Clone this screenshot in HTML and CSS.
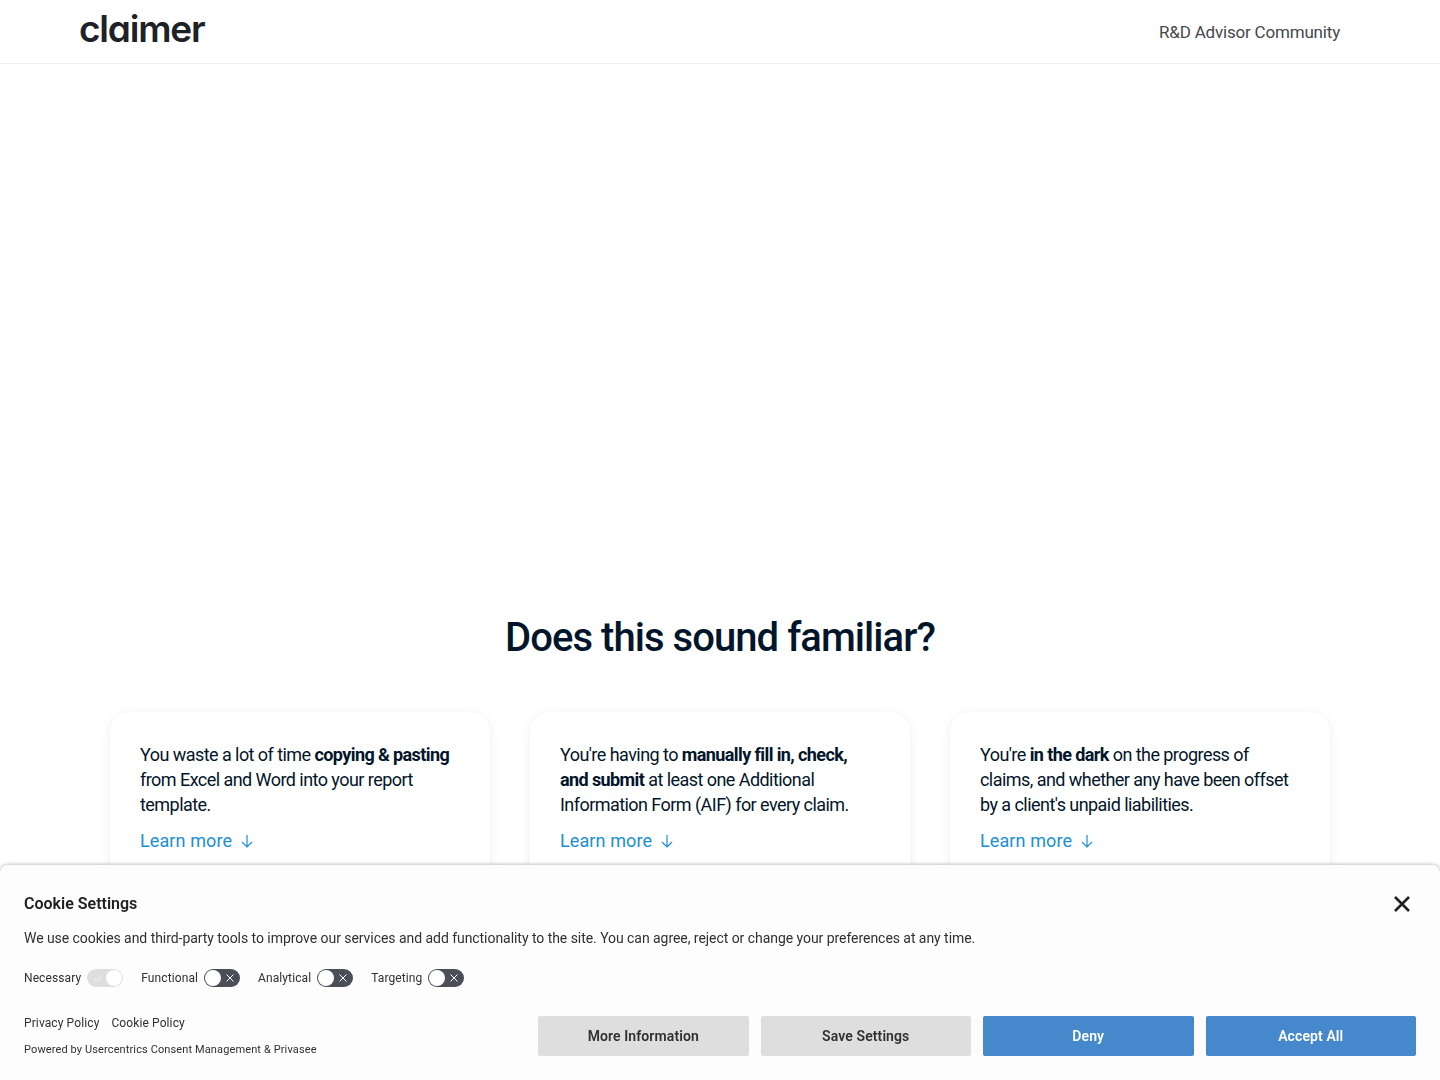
FILE: index.html
```html
<!DOCTYPE html>
<html lang="en">
<head>
    <meta charset="UTF-8">
    <meta name="viewport" content="width=device-width, initial-scale=1.0">
    <title>Claimer</title>
    <link rel="stylesheet" href="styles.css">
</head>
<body>
    <header class="site-header">
        <a class="logo" href="#">claimer</a>
        <a class="nav-link" href="#">R&amp;D Advisor Community</a>
    </header>

    <main>
        <section class="hero"></section>

        <section class="familiar">
            <h2>Does this sound familiar?</h2>
            <div class="cards">
                <div class="card">
                    <p>You waste a lot of time <strong>copying &amp; pasting</strong> from Excel and Word into your report template.</p>
                    <a class="learn-more" href="#">Learn more
                        <svg viewBox="0 0 14 14" width="14" height="14"><path d="M7 1v12M2 8l5 5 5-5"/></svg>
                    </a>
                </div>
                <div class="card">
                    <p>You're having to <strong>manually fill in, check, and submit</strong> at least one Additional Information Form (AIF) for every claim.</p>
                    <a class="learn-more" href="#">Learn more
                        <svg viewBox="0 0 14 14" width="14" height="14"><path d="M7 1v12M2 8l5 5 5-5"/></svg>
                    </a>
                </div>
                <div class="card">
                    <p>You're <strong>in the dark</strong> on the progress of claims, and whether any have been offset by a client's unpaid liabilities.</p>
                    <a class="learn-more" href="#">Learn more
                        <svg viewBox="0 0 14 14" width="14" height="14"><path d="M7 1v12M2 8l5 5 5-5"/></svg>
                    </a>
                </div>
            </div>
        </section>
    </main>

    <div class="cookie-banner">
        <div class="cookie-top">
            <h3>Cookie Settings</h3>
            <button class="cookie-close" aria-label="Close">
                <svg viewBox="0 0 16 16" width="16" height="16"><path d="M1 1l14 14M15 1L1 15"/></svg>
            </button>
        </div>
        <p class="cookie-text">We use cookies and third-party tools to improve our services and add functionality to the site. You can agree, reject or change your preferences at any time.</p>
        <div class="toggles">
            <div class="toggle-item">
                <span>Necessary</span>
                <span class="toggle toggle-on">
                    <svg viewBox="0 0 12 12" width="12" height="12"><path d="M2 6.5l3 3 5-7"/></svg>
                    <i class="knob"></i>
                </span>
            </div>
            <div class="toggle-item">
                <span>Functional</span>
                <span class="toggle toggle-off">
                    <i class="knob"></i>
                    <svg viewBox="0 0 12 12" width="12" height="12"><path d="M2.5 2.5l7 7M9.5 2.5l-7 7"/></svg>
                </span>
            </div>
            <div class="toggle-item">
                <span>Analytical</span>
                <span class="toggle toggle-off">
                    <i class="knob"></i>
                    <svg viewBox="0 0 12 12" width="12" height="12"><path d="M2.5 2.5l7 7M9.5 2.5l-7 7"/></svg>
                </span>
            </div>
            <div class="toggle-item">
                <span>Targeting</span>
                <span class="toggle toggle-off">
                    <i class="knob"></i>
                    <svg viewBox="0 0 12 12" width="12" height="12"><path d="M2.5 2.5l7 7M9.5 2.5l-7 7"/></svg>
                </span>
            </div>
        </div>
        <div class="cookie-bottom">
            <div class="cookie-links">
                <div class="policy-links">
                    <a href="#">Privacy Policy</a>
                    <a href="#">Cookie Policy</a>
                </div>
                <p class="powered">Powered by Usercentrics Consent Management &amp; Privasee</p>
            </div>
            <div class="cookie-buttons">
                <button class="btn btn-grey">More Information</button>
                <button class="btn btn-grey">Save Settings</button>
                <button class="btn btn-blue">Deny</button>
                <button class="btn btn-blue">Accept All</button>
            </div>
        </div>
    </div>
</body>
</html>
```

FILE: styles.css
```css
* {
    box-sizing: border-box;
}

html,
body {
    height: 1080px;
    overflow: hidden;
}

body {
    margin: 0;
    font-family: Roboto, Arial, sans-serif;
    background: #ffffff;
    color: #02152a;
}

a {
    text-decoration: none;
}

.site-header {
    height: 64px;
    padding: 0 100px 0 79px;
    display: flex;
    justify-content: space-between;
    align-items: center;
    border-bottom: 1px solid #eeeeee;
}

.logo {
    font-family: Inter, sans-serif;
    font-feature-settings: "cv11" 1;
    font-weight: 600;
    font-size: 37px;
    line-height: 44px;
    letter-spacing: -1.2px;
    color: #1e2227;
    margin-top: -5px;
}

.nav-link {
    font-size: 17px;
    letter-spacing: -0.19px;
    color: #45484c;
}

.hero {
    height: 547px;
}

.familiar h2 {
    margin: 0;
    text-align: center;
    font-size: 40px;
    line-height: 54px;
    font-weight: 500;
    letter-spacing: -0.95px;
    color: #02152a;
}

.cards {
    margin-top: 47px;
    padding: 0 110px;
    display: grid;
    grid-template-columns: repeat(3, 380px);
    gap: 40px;
}

.card {
    height: 240px;
    padding: 30px;
    border-radius: 20px;
    background: #ffffff;
    box-shadow: 0 2px 12px rgba(0, 0, 0, 0.07);
}

.card p {
    margin: 0;
    max-width: 315px;
    font-size: 18px;
    line-height: 25px;
    letter-spacing: -0.55px;
}

.card strong {
    font-weight: 700;
    letter-spacing: -0.6px;
}

.learn-more {
    margin-top: 12px;
    display: flex;
    align-items: center;
    gap: 8px;
    font-size: 18px;
    line-height: 24px;
    letter-spacing: 0.1px;
    color: #1b8fd2;
}

.learn-more svg {
    fill: none;
    stroke: #1b8fd2;
    stroke-width: 1.2;
}

.cookie-banner {
    position: fixed;
    left: 0;
    right: 0;
    bottom: 0;
    height: 215px;
    padding: 24px;
    background: #fdfdfd;
    border-radius: 8px 8px 0 0;
    box-shadow: 0 0 4px rgba(0, 0, 0, 0.35);
    color: #303030;
}

.cookie-top {
    display: flex;
    justify-content: space-between;
    align-items: center;
    height: 28px;
    margin: 1px 0 10px;
}

.cookie-top h3 {
    margin: 0;
    font-size: 16px;
    line-height: 28px;
    font-weight: 600;
    color: #212121;
}

.cookie-close {
    padding: 0;
    margin-right: 6px;
    border: none;
    background: none;
    display: flex;
}

.cookie-close svg {
    fill: none;
    stroke: #212121;
    stroke-width: 2.6;
}

.cookie-text {
    margin: 0;
    font-size: 14px;
    line-height: 20px;
    letter-spacing: -0.05px;
}

.toggles {
    margin-top: 21px;
    display: flex;
    gap: 18px;
    font-size: 12px;
    letter-spacing: 0.1px;
}

.toggle-item {
    display: flex;
    align-items: center;
    gap: 6px;
}

.toggle {
    width: 36px;
    height: 18px;
    border-radius: 9px;
    display: flex;
    align-items: center;
    justify-content: space-between;
}

.knob {
    width: 16px;
    height: 16px;
    border-radius: 50%;
    background: #ffffff;
}

.toggle svg {
    fill: none;
    stroke: #ffffff;
    stroke-width: 1;
}

.toggle-on {
    background: #dedede;
    padding: 0 1px 0 5px;
}

.toggle-on svg {
    stroke: #f2f2f2;
}

.toggle-off {
    background: #4a4e57;
    padding: 0 4px 0 1px;
}

.cookie-bottom {
    margin-top: 29px;
    display: flex;
    justify-content: space-between;
    align-items: flex-start;
}

.policy-links {
    display: flex;
    gap: 12px;
    font-size: 12px;
    line-height: 14px;
    letter-spacing: 0.11px;
}

.policy-links a {
    color: #303030;
}

.powered {
    margin: 13px 0 0;
    font-size: 11px;
    line-height: 14px;
    letter-spacing: 0.12px;
}

.cookie-buttons {
    display: flex;
    gap: 12px;
}

.btn {
    width: 210.5px;
    height: 40px;
    border: none;
    border-radius: 2px;
    font-family: Roboto, Arial, sans-serif;
    font-size: 14px;
    font-weight: 600;
    letter-spacing: 0.1px;
}

.btn-grey {
    background: #dedede;
    color: #303030;
}

.btn-blue {
    background: #4588cb;
    color: #ffffff;
}
```
